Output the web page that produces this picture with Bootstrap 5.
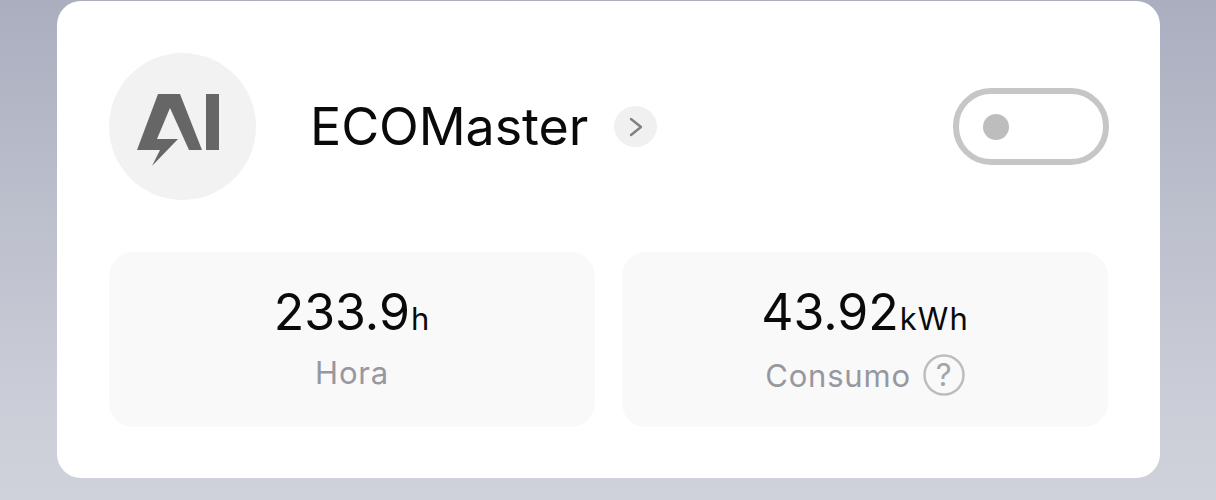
<!DOCTYPE html>
<html lang="pt-BR">
<head>
  <meta charset="UTF-8">
  <meta name="viewport" content="width=device-width, initial-scale=1">
  <title>ECOMaster</title>
  <link rel="stylesheet" href="https://cdn.jsdelivr.net/npm/bootstrap@5.3.3/dist/css/bootstrap.min.css">
  <style>
    html, body { height: 500px; overflow: hidden; }
    body {
      background: linear-gradient(180deg, #abaebf 0%, #c9ccd6 75%, #d0d2db 100%);
      font-family: Inter, "Liberation Sans", sans-serif;
      padding: 1px 56px 22px 57px;
    }
    .eco-panel {
      height: 477px;
      background: #fff;
      border-radius: 24px;
      padding: 52px 52px 51px;
    }
    .eco-logo { width: 147px; height: 147px; flex: none; }
    .eco-name { font-size: 52px; line-height: 1; color: #0a0a0a; margin-left: 54px; letter-spacing: -.1px; }
    .eco-arrow {
      width: 43px; height: 41px; margin-left: 26px;
      background: #f0f0f0;
    }
    .eco-toggle {
      width: 156px; height: 77px;
      border: 6px solid #c6c6c6;
      border-radius: 38px;
      padding-left: 24px;
      margin-right: -1px;
    }
    .eco-dot { width: 26px; height: 26px; background: #bdbdbd; }
    .eco-stats { gap: 27px; margin-top: 52px; }
    .eco-tile {
      height: 175px;
      padding-top: 35px;
      background: #f9f9f9;
      border-radius: 24px;
    }
    .eco-value { font-size: 50px; line-height: 1; color: #0a0a0a; }
    .eco-unit { font-size: 31px; letter-spacing: 1px; margin-left: 1px; }
    .eco-label { font-size: 31px; line-height: 1; color: #97979f; margin-top: 20px; letter-spacing: .8px; }
    .eco-label-help { margin-top: 17px; }
    .eco-help { width: 42px; height: 42px; margin-left: 12px; }
  </style>
</head>
<body>

<div class="eco-panel">
  <div class="d-flex align-items-center">
    <svg class="eco-logo" viewBox="109 53 147 147" role="img" aria-label="AI">
      <circle cx="182.5" cy="126.5" r="73.5" fill="#f2f2f2"/>
      <path fill="#666" d="M158 94H180L202 150H189L170 108L157 139H178L152 166L160 150H137Z"/>
      <rect x="206" y="94" width="13" height="56" fill="#666"/>
    </svg>
    <div class="eco-name">ECOMaster</div>
    <div class="eco-arrow rounded-circle d-flex align-items-center justify-content-center">
      <svg width="14" height="20" viewBox="0 0 14 20"><path d="M2 2L12 10L2 18" fill="none" stroke="#808080" stroke-width="2.4" stroke-linecap="round" stroke-linejoin="round"/></svg>
    </div>
    <div class="eco-toggle ms-auto d-flex align-items-center">
      <div class="eco-dot rounded-circle"></div>
    </div>
  </div>

  <div class="eco-stats d-flex">
    <div class="eco-tile flex-fill w-50 d-flex flex-column align-items-center">
      <div class="eco-value">233.9<span class="eco-unit">h</span></div>
      <div class="eco-label">Hora</div>
    </div>
    <div class="eco-tile flex-fill w-50 d-flex flex-column align-items-center">
      <div class="eco-value">43.92<span class="eco-unit">kWh</span></div>
      <div class="eco-label eco-label-help d-flex align-items-center">Consumo
        <svg class="eco-help" viewBox="0 0 42 42"><circle cx="21" cy="21" r="19.5" fill="none" stroke="#bdbdc0" stroke-width="2.5"/><text x="21" y="32" text-anchor="middle" font-size="31" fill="#a5a5a8" font-family="Inter, sans-serif">?</text></svg>
      </div>
    </div>
  </div>
</div>

<script src="https://cdn.jsdelivr.net/npm/bootstrap@5.3.3/dist/js/bootstrap.bundle.min.js"></script>
</body>
</html>
